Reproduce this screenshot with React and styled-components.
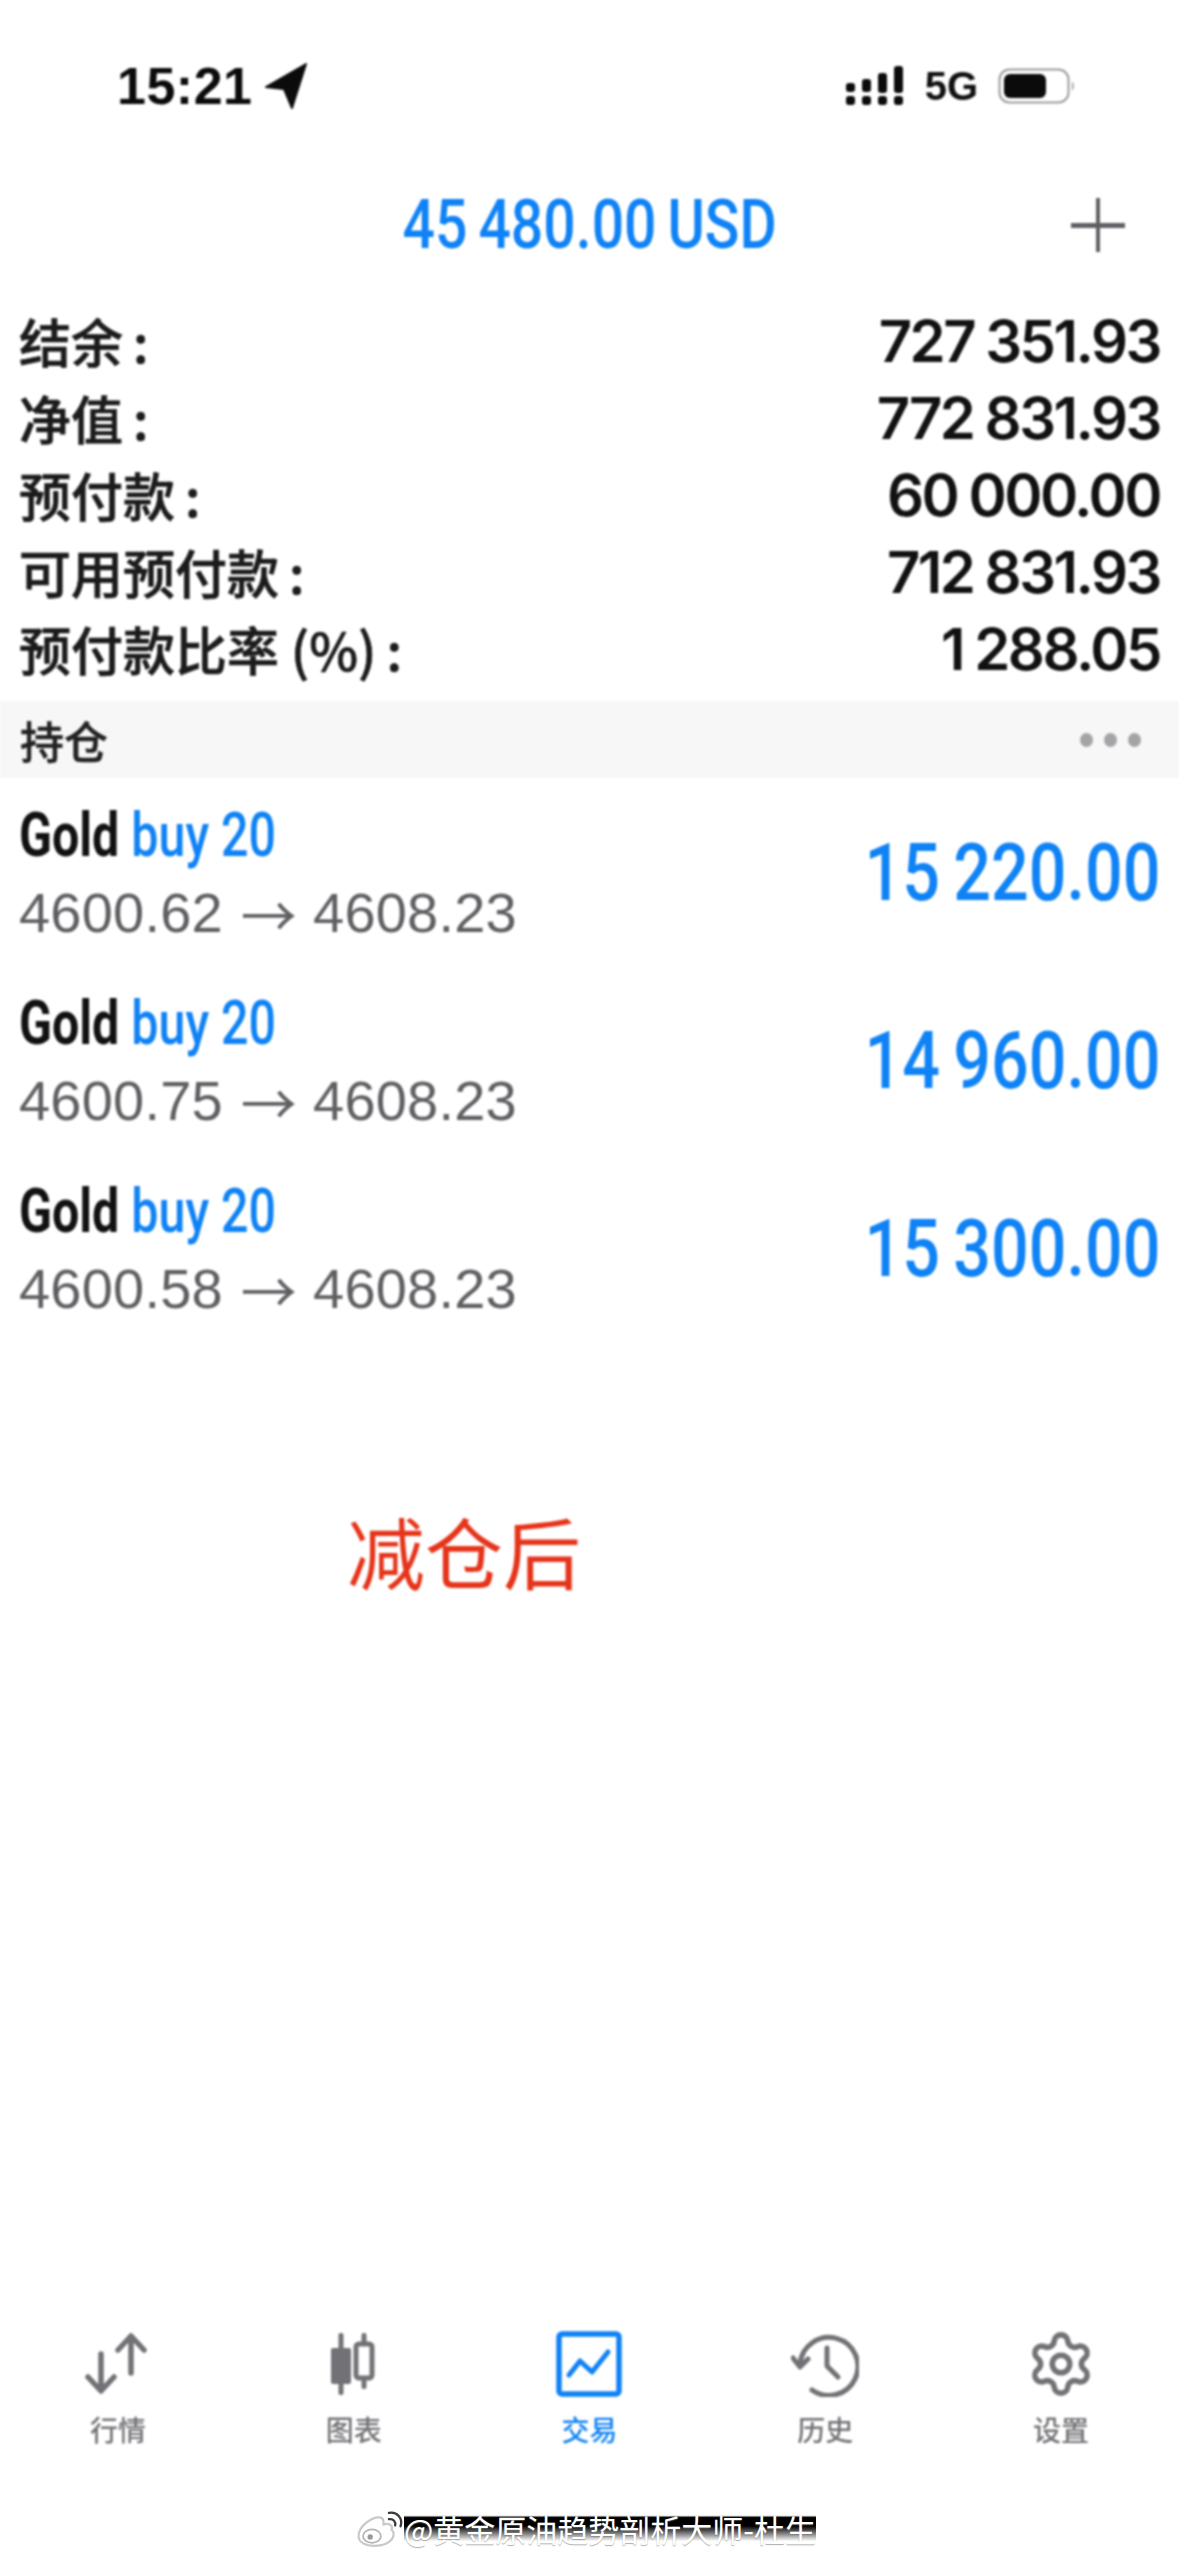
import React from 'react';
import styled, { createGlobalStyle } from 'styled-components';
import { Settings } from 'lucide-react';

const BLUE = '#0f82f5';
const GRAY = '#5f5f63';
const CJK = '"Noto Sans CJK SC", "Liberation Sans", sans-serif';

const GlobalStyle = createGlobalStyle`
  html, body { margin: 0; padding: 0; background: #fff; }
  * { box-sizing: border-box; }
`;

const Page = styled.div`
  width: 1179px;
  height: 2556px;
  overflow: hidden;
  display: flex;
  flex-direction: column;
  background: #fff;
  font-family: 'Liberation Sans', Arial, sans-serif;
`;

const Soft = styled.div`
  display: flex;
  flex-direction: column;
  flex: 1;
  filter: blur(0.9px);
`;

const StatusBar = styled.div`
  height: 172px;
  padding: 0 103px 0 117px;
  display: flex;
  align-items: center;
  justify-content: space-between;
`;

const StatusGroup = styled.div`
  display: flex;
  align-items: center;
  gap: ${(p) => p.$gap || 12}px;
`;

const Time = styled.span`
  font-size: 52px;
  font-weight: 700;
  color: #0b0b0b;
  letter-spacing: 0.5px;
`;

const Net = styled.span`
  font-size: 40px;
  font-weight: 700;
  color: #111;
`;

const Header = styled.div`
  height: 106px;
  position: relative;
  display: flex;
  align-items: center;
  justify-content: center;
`;

const Narrow = styled.span`
  display: inline-block;
  font-family: Roboto, 'Liberation Sans', sans-serif;
  font-weight: ${(p) => p.$weight || 500};
  font-size: ${(p) => p.$size}px;
  color: ${(p) => p.$color || '#111'};
  white-space: nowrap;
  word-spacing: ${(p) => p.$wordGap || 0}px;
  transform: scaleX(${(p) => p.$sx});
  transform-origin: ${(p) => p.$origin || 'center'};
`;

const PlusBtn = styled.div`
  position: absolute;
  right: 54px;
  top: 26px;
  width: 54px;
  height: 54px;
  &::before, &::after {
    content: '';
    position: absolute;
    background: ${GRAY};
  }
  &::before { left: 0; right: 0; top: 25px; height: 5px; }
  &::after { top: 0; bottom: 0; left: 25px; width: 4px; }
`;

const Stats = styled.div`
  padding: 24px 19px 14px 19px;
  display: flex;
  flex-direction: column;
`;

const StatRow = styled.div`
  height: 77px;
  display: flex;
  align-items: center;
  justify-content: space-between;
`;

const StatLabel = styled.span`
  font-family: ${CJK};
  font-size: 52px;
  font-weight: 500;
  color: #1b1b1b;
  white-space: pre;
  -webkit-text-stroke: 0.7px #1b1b1b;
`;

const Colon = styled.span`
  margin-left: 10px;
`;

const StatValue = styled.span`
  font-family: Inter, Roboto, sans-serif;
  font-size: 58px;
  font-weight: 600;
  color: #111;
  letter-spacing: -2.5px;
  word-spacing: -1px;
`;

const SectionBar = styled.div`
  height: 77px;
  padding: 0 38px 0 20px;
  background: #f7f7f7;
  display: flex;
  align-items: center;
  justify-content: space-between;
`;

const SectionTitle = styled.span`
  font-family: ${CJK};
  font-size: 44px;
  font-weight: 500;
  color: #222;
  -webkit-text-stroke: 0.5px #222;
`;

const Dots = styled.div`
  display: flex;
  gap: 11px;
  span {
    width: 13px;
    height: 14px;
    border-radius: 50%;
    background: #a4a4a8;
  }
`;

const Positions = styled.div`
  padding-top: 1px;
  display: flex;
  flex-direction: column;
`;

const PositionRow = styled.div`
  height: 188px;
  padding: 0 19px 0 19px;
  display: flex;
  align-items: center;
  justify-content: space-between;
`;

const PositionInfo = styled.div`
  display: flex;
  flex-direction: column;
  gap: 6px;
`;

const Buy = styled.span`
  color: ${BLUE};
  font-weight: 500;
`;

const Prices = styled.div`
  font-size: 56px;
  line-height: 72px;
  color: ${GRAY};
  letter-spacing: 0.2px;
  display: flex;
  align-items: center;
`;

const PriceArrow = styled.span`
  font-family: ${CJK};
  font-size: 56px;
  line-height: 72px;
  margin: 0 16px 0 18px;
`;

const Note = styled.div`
  margin: 151px 0 0 347px;
  font-family: ${CJK};
  font-size: 78px;
  line-height: 112px;
  color: #e5341a;
`;

const TabBar = styled.div`
  margin-top: auto;
  padding-bottom: 107px;
  display: grid;
  grid-template-columns: repeat(5, 1fr);
`;

const Tab = styled.div`
  display: flex;
  flex-direction: column;
  align-items: center;
  gap: 12px;
  color: ${(p) => (p.$active ? BLUE : '#727276')};
`;

const TabIcon = styled.div`
  width: 72px;
  height: 66px;
  display: flex;
  align-items: center;
  justify-content: center;
`;

const TabLabel = styled.span`
  font-family: ${CJK};
  font-size: 28px;
  line-height: 40px;
  font-weight: 500;
`;

const Watermark = styled.div`
  position: absolute;
  left: 355px;
  top: 2502px;
  height: 54px;
  display: flex;
  align-items: center;
`;

const WatermarkText = styled.span`
  margin-left: -1px;
  font-family: ${CJK};
  font-size: 31px;
  line-height: 38px;
  color: #fff;
  white-space: nowrap;
  background: linear-gradient(rgba(0, 0, 0, 0) 14%, #000 20%, #000 42%, rgba(0, 0, 0, 0) 82%);
  text-shadow: 0 1px 1px rgba(120, 120, 120, 0.6);
`;

const LocationArrow = () => (
  <svg width="42" height="46" viewBox="0 0 42 46">
    <path d="M41 1 L27 45 L19 26 L1 24 Z" fill="#0b0b0b" stroke="#0b0b0b" strokeWidth="2" strokeLinejoin="round" />
  </svg>
);

const SignalDots = () => (
  <svg width="60" height="42" viewBox="0 0 60 42" fill="#0b0b0b">
    <rect x="1" y="18" width="9" height="9" rx="3" />
    <rect x="1" y="31" width="9" height="9" rx="3" />
    <rect x="17" y="14" width="9" height="13" rx="3" />
    <rect x="17" y="31" width="9" height="9" rx="3" />
    <rect x="33" y="8" width="9" height="20" rx="3" />
    <rect x="33" y="31" width="9" height="9" rx="3" />
    <rect x="49" y="1" width="9" height="27" rx="3" />
    <rect x="49" y="31" width="9" height="9" rx="3" />
  </svg>
);

const Battery = () => (
  <svg width="78" height="36" viewBox="0 0 78 36">
    <rect x="1.5" y="1.5" width="69" height="33" rx="10" fill="none" stroke="#9a9a9a" strokeWidth="2" />
    <rect x="6" y="6" width="42" height="24" rx="6" fill="#0b0b0b" />
    <path d="M74 13 q3.5 5 0 10 Z" fill="#9a9a9a" />
  </svg>
);

const MarketIcon = () => (
  <svg width="68" height="62" viewBox="0 0 68 62" fill="none" stroke="currentColor" strokeWidth="5.5" strokeLinecap="round" strokeLinejoin="round">
    <path d="M17 21 V57 M4 44 L17 58 L30 44" />
    <path d="M47 40 V4 M34 17 L47 3 L60 17" />
  </svg>
);

const ChartIcon = () => (
  <svg width="50" height="64" viewBox="0 0 50 64" fill="currentColor">
    <rect x="9.5" y="1" width="5" height="62" rx="2" />
    <rect x="2" y="16" width="20" height="36" rx="2" />
    <rect x="32.5" y="1" width="5" height="56" rx="2" />
    <rect x="27" y="12" width="16" height="34" rx="3" fill="#fff" stroke="currentColor" strokeWidth="5" />
  </svg>
);

const TradeIcon = () => (
  <svg width="66" height="66" viewBox="0 0 66 66" fill="none" stroke="currentColor" strokeLinecap="round" strokeLinejoin="round">
    <rect x="3" y="3" width="60" height="60" rx="3" strokeWidth="5.5" />
    <path d="M13 44 L24 30 L36 41 L52 21" strokeWidth="5" />
  </svg>
);

const HistoryIcon = () => (
  <svg width="68" height="66" viewBox="0 0 68 66" fill="none" stroke="currentColor" strokeWidth="5" strokeLinecap="round" strokeLinejoin="round">
    <path d="M9 33 A29 29 0 1 1 21 59" />
    <path d="M2 27 L9 36 L17 28" />
    <path d="M36 17 V35 L47 46" />
  </svg>
);

const WeiboLogo = () => (
  <svg width="50" height="40" viewBox="0 0 56 44" fill="none">
    <path d="M4 30 C4 18 20 8 28 9 C33 10 32 15 32 17 C38 15 43 18 41 23 C46 26 44 40 22 41 C12 41 4 37 4 30 Z" fill="#fff" stroke="#c9c9c9" strokeWidth="2.5" />
    <ellipse cx="19" cy="30" rx="10" ry="7.5" fill="#fff" stroke="#b5b5b5" strokeWidth="2" />
    <circle cx="17" cy="31" r="3" fill="#9a9a9a" />
    <path d="M38 11 C43 10 46 14 45 18 M38 4 C47 2 54 10 51 19" stroke="#3a3a3a" strokeWidth="2.5" strokeLinecap="round" />
  </svg>
);

const stats = [
  ['结余', '727 351.93'],
  ['净值', '772 831.93'],
  ['预付款', '60 000.00'],
  ['可用预付款', '712 831.93'],
  ['预付款比率 (%)', '1 288.05'],
];

const positions = [
  { open: '4600.62', close: '4608.23', profit: '15 220.00' },
  { open: '4600.75', close: '4608.23', profit: '14 960.00' },
  { open: '4600.58', close: '4608.23', profit: '15 300.00' },
];

const tabs = [
  { label: '行情', icon: <MarketIcon /> },
  { label: '图表', icon: <ChartIcon /> },
  { label: '交易', icon: <TradeIcon />, active: true },
  { label: '历史', icon: <HistoryIcon /> },
  { label: '设置', icon: <Settings size={70} strokeWidth={1.9} /> },
];

const App = () => (
  <>
    <GlobalStyle />
    <Page>
      <Soft>
        <StatusBar>
          <StatusGroup>
            <Time>15:21</Time>
            <LocationArrow />
          </StatusGroup>
          <StatusGroup $gap={20}>
            <SignalDots />
            <Net>5G</Net>
            <Battery />
          </StatusGroup>
        </StatusBar>

        <Header>
          <Narrow $size={68} $sx={0.84} $wordGap={-4} $color={BLUE}>45 480.00 USD</Narrow>
          <PlusBtn />
        </Header>

        <Stats>
          {stats.map(([label, value]) => (
            <StatRow key={label}>
              <StatLabel>{label}<Colon>:</Colon></StatLabel>
              <StatValue>{value}</StatValue>
            </StatRow>
          ))}
        </Stats>

        <SectionBar>
          <SectionTitle>持仓</SectionTitle>
          <Dots><span /><span /><span /></Dots>
        </SectionBar>

        <Positions>
          {positions.map((p) => (
            <PositionRow key={p.open}>
              <PositionInfo>
                <Narrow $size={62} $sx={0.78} $weight={700} $origin="left">
                  Gold <Buy>buy 20</Buy>
                </Narrow>
                <Prices>{p.open}<PriceArrow>→</PriceArrow>{p.close}</Prices>
              </PositionInfo>
              <Narrow $size={80} $sx={0.83} $wordGap={-4} $origin="right" $color={BLUE}>{p.profit}</Narrow>
            </PositionRow>
          ))}
        </Positions>

        <Note>减仓后</Note>

        <TabBar>
          {tabs.map((t) => (
            <Tab key={t.label} $active={t.active}>
              <TabIcon>{t.icon}</TabIcon>
              <TabLabel>{t.label}</TabLabel>
            </Tab>
          ))}
        </TabBar>
      </Soft>

      <Watermark>
        <WeiboLogo />
        <WatermarkText>@黄金原油趋势剖析大师-杜生</WatermarkText>
      </Watermark>
    </Page>
  </>
);

export default App;
